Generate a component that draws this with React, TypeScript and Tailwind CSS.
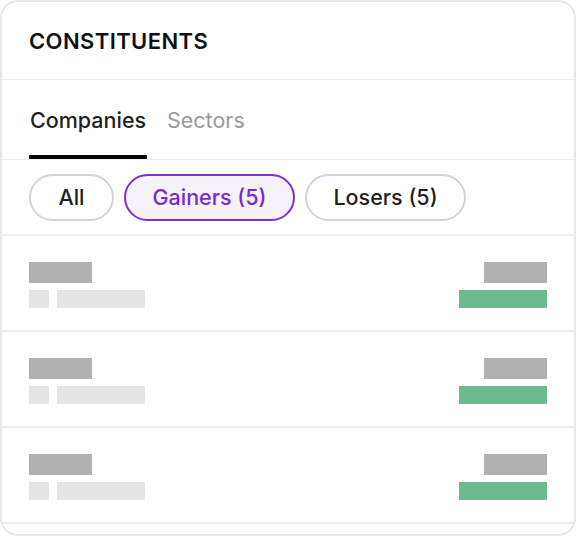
import React from 'react';

const rows = [0, 1, 2, 3];

function SkeletonRow() {
  return (
    <div className="flex items-start justify-between border-b-2 border-[#ebebeb] px-[27px] pt-[26px] pb-[22px]">
      <div className="flex flex-col gap-[7px]">
        <div className="h-[21px] w-[63px] bg-[#b0b0b0]" />
        <div className="flex gap-[8px]">
          <div className="h-[18px] w-[20px] bg-[#e5e5e5]" />
          <div className="h-[18px] w-[88px] bg-[#e5e5e5]" />
        </div>
      </div>
      <div className="flex flex-col items-end gap-[7px]">
        <div className="h-[21px] w-[63px] bg-[#b0b0b0]" />
        <div className="h-[18px] w-[88px] bg-[#6cba8d]" />
      </div>
    </div>
  );
}

export default function App() {
  const font = { fontFamily: 'Inter, "Noto Sans", sans-serif' };
  return (
    <div className="h-[536px] w-[576px] bg-white" style={font}>
      <div className="flex h-full w-full flex-col overflow-hidden rounded-[18px] border-2 border-[#e8e8e8] bg-white">
        {/* Header */}
        <div className="flex h-[78px] shrink-0 items-center border-b border-[#eeeeee] px-[27px] pt-[1px]">
          <h2 className="text-[22px] font-semibold tracking-[0.4px] text-[#111111]">CONSTITUENTS</h2>
        </div>

        {/* Tabs */}
        <div className="flex h-[80px] shrink-0 items-end gap-[20px] border-b border-[#eeeeee] px-[27px]">
          <button className="flex h-full flex-col items-start justify-end">
            <span className="pb-[19px] pl-[1px] text-[21.5px] font-medium leading-[32px] text-[#1f1f1f]">Companies</span>
            <span className="h-[4px] w-[118px] bg-black" />
          </button>
          <button className="flex h-full flex-col justify-end">
            <span className="pb-[23px] text-[21.5px] font-normal leading-[32px] text-[#9a9a9a]">Sectors</span>
          </button>
        </div>

        {/* Filters */}
        <div className="flex h-[76px] shrink-0 items-center gap-[10px] border-b-2 border-[#f0f0f0] px-[27px] pt-[1px]">
          <button className="h-[47px] w-[85px] rounded-full border-2 border-[#d4d4d4] text-[21.5px] font-medium text-[#1f1f1f]">
            All
          </button>
          <button className="h-[47px] w-[171px] rounded-full border-2 border-[#7e2fd0] bg-[#f5f2fa] text-[21.5px] font-medium text-[#7a2bcc]">
            Gainers (5)
          </button>
          <button className="h-[47px] w-[161px] rounded-full border-2 border-[#d4d4d4] text-[21.5px] font-medium text-[#1f1f1f]">
            Losers (5)
          </button>
        </div>

        {/* Rows */}
        <div className="flex flex-col">
          {rows.map((r) => (
            <SkeletonRow key={r} />
          ))}
        </div>
      </div>
    </div>
  );
}
